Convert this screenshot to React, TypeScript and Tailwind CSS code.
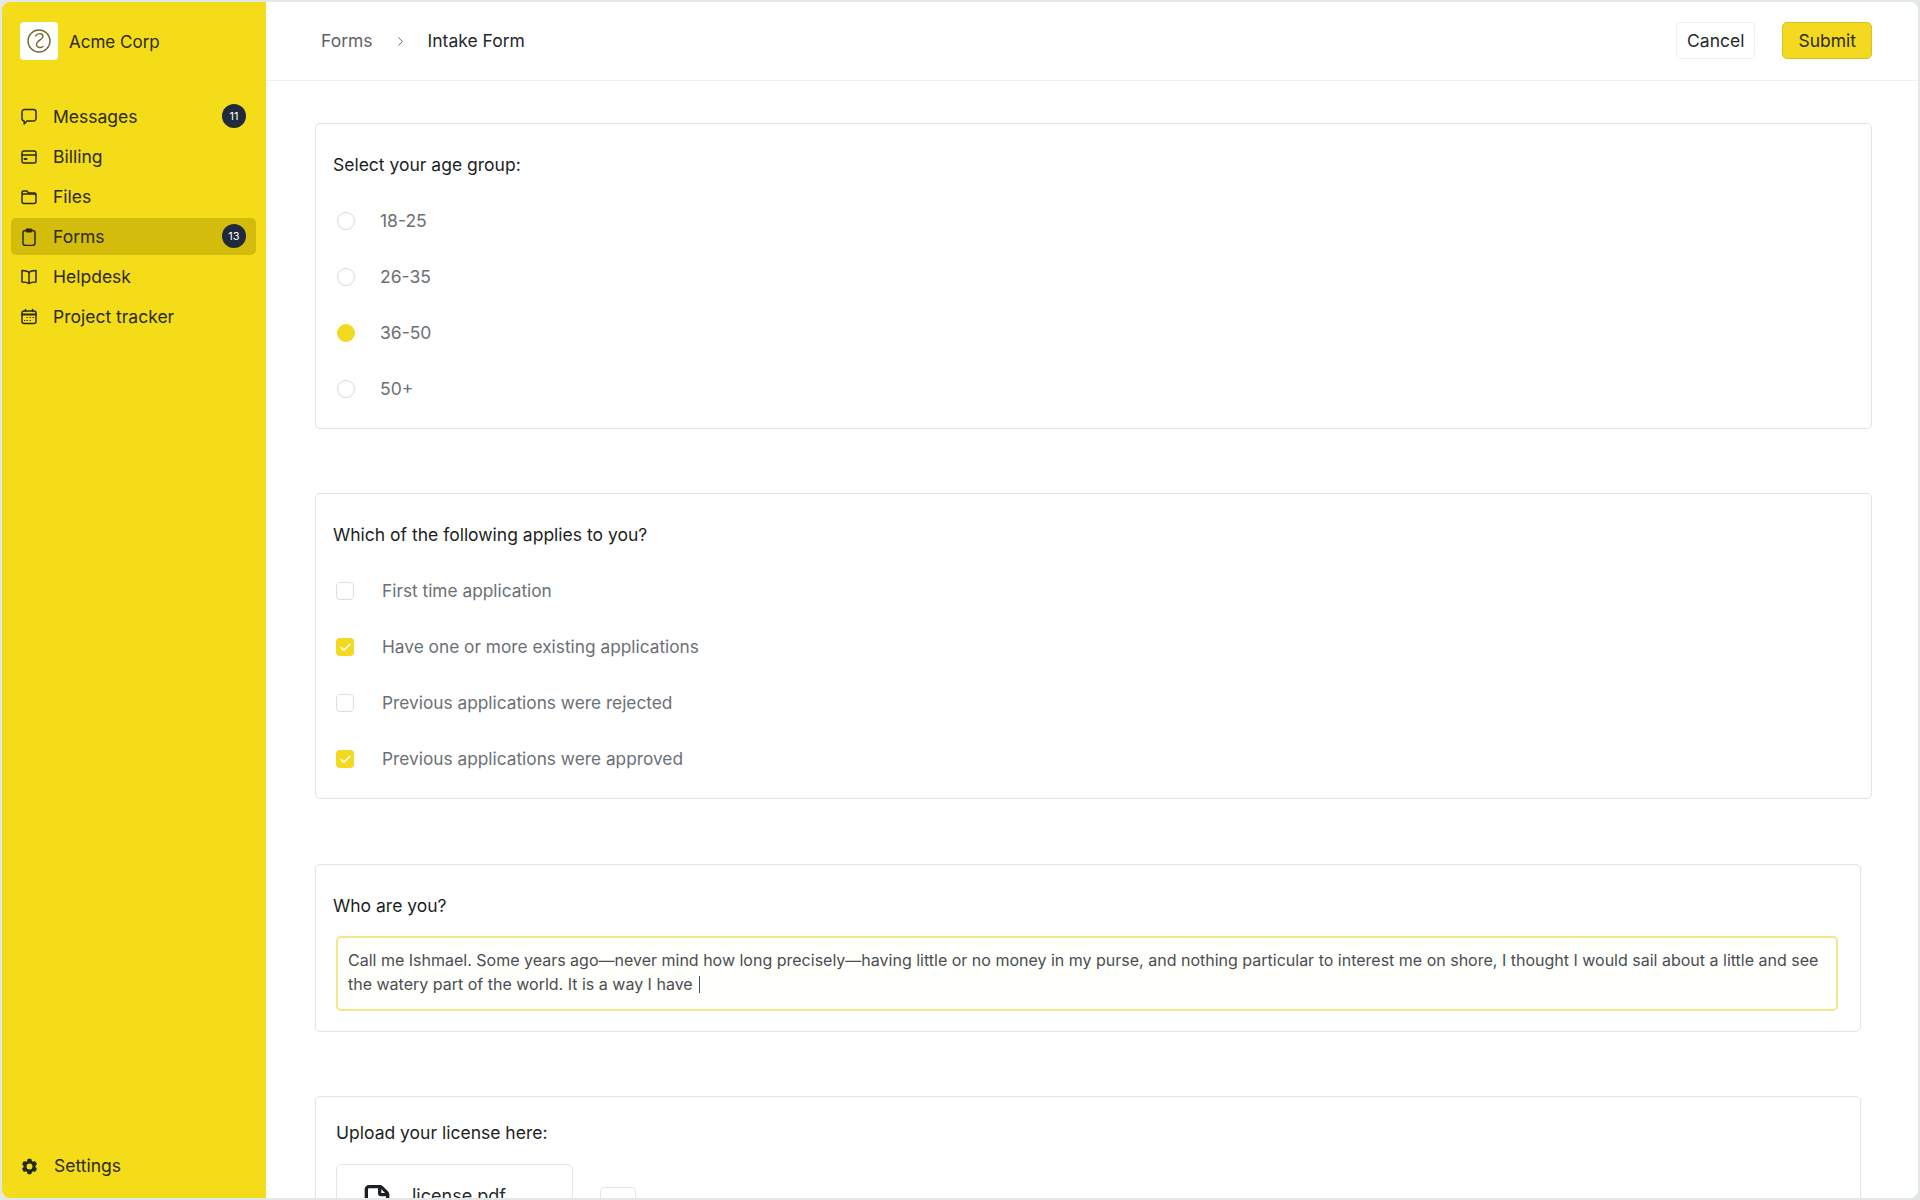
import { Check, ChevronRight, File } from "lucide-react";
import { HiCog6Tooth } from "react-icons/hi2";

const iconStroke = { fill: "none", stroke: "#2b2a12", strokeWidth: 1.5, strokeLinecap: "round", strokeLinejoin: "round" } as const;

function MessageIcon() {
  return (
    <svg width="18" height="18" viewBox="0 0 18 18" {...iconStroke}>
      <path d="M4.500 1.500h9a2.500 2.500 0 0 1 2.500 2.500v6.500a2.500 2.500 0 0 1-2.500 2.500h-6.500l-2.800 3v-3h-.2a2.500 2.500 0 0 1-2-2.500v-6.500a2.500 2.500 0 0 1 2.500-2.500z" />
    </svg>
  );
}

function CardIcon() {
  return (
    <svg width="18" height="18" viewBox="0 0 18 18" {...iconStroke}>
      <rect x="2" y="3" width="14" height="12" rx="2" />
      <path d="M2 7h14" />
      <path d="M4.500 11h2" strokeWidth="2" />
    </svg>
  );
}

function FolderIcon() {
  return (
    <svg width="18" height="18" viewBox="0 0 18 18" {...iconStroke}>
      <path d="M2 6v-1.500a1.500 1.500 0 0 1 1.500-1.500h3.500l1.500 2h6a1.500 1.500 0 0 1 1.500 1.500" />
      <rect x="2" y="6" width="14" height="9.500" rx="2" />
    </svg>
  );
}

function ClipboardIcon() {
  return (
    <svg width="18" height="18" viewBox="0 0 18 18" {...iconStroke}>
      <rect x="3" y="2.500" width="12" height="15" rx="2.500" />
      <rect x="6" y="1" width="6" height="3" rx="1" fill="#2b2a12" strokeWidth="1" />
    </svg>
  );
}

function BookIcon() {
  return (
    <svg width="18" height="18" viewBox="0 0 18 18" {...iconStroke}>
      <path d="M9 4.500c-1.500-1.500-3.500-2-7-2v11.500c3.500 0 5.500 .5 7 1.500c1.500-1 3.500-1.500 7-1.500v-11.500c-3.500 0-5.500 .5-7 2z" />
      <path d="M9 4.500v11" />
    </svg>
  );
}

function CalendarIcon() {
  return (
    <svg width="18" height="18" viewBox="0 0 18 18" {...iconStroke}>
      <rect x="2" y="3" width="14" height="12.500" rx="2" />
      <path d="M2 6.500h14" strokeWidth="2" />
      <path d="M5.500 1.500v2M12.500 1.500v2" />
      <path d="M7 9.500h.5M10 9.500h.5M13 9.500h.5M4.500 12.500h.5M7 12.500h.5M10 12.500h.5" strokeWidth="1.100" />
    </svg>
  );
}

const navItems = [
  { label: "Messages", icon: MessageIcon, badge: "11" },
  { label: "Billing", icon: CardIcon },
  { label: "Files", icon: FolderIcon },
  { label: "Forms", icon: ClipboardIcon, badge: "13", active: true },
  { label: "Helpdesk", icon: BookIcon },
  { label: "Project tracker", icon: CalendarIcon },
];

const ages = [
  { label: "18-25" },
  { label: "26-35" },
  { label: "36-50", checked: true },
  { label: "50+" },
];

const applies = [
  { label: "First time application" },
  { label: "Have one or more existing applications", checked: true },
  { label: "Previous applications were rejected" },
  { label: "Previous applications were approved", checked: true },
];

function Logo() {
  return (
    <div className="flex h-[38px] w-[38px] items-center justify-center rounded-[4px] bg-white">
      <svg width="26" height="26" viewBox="0 0 26 26" fill="none" stroke="#6f6a32" strokeWidth="1.4" strokeLinecap="round">
        <circle cx="13" cy="13" r="11" />
        <path d="M9.500 8c2-3.500 7.500-3 7.500 .5c0 3-6.500 4-6.500 8c0 3 4 4 6.500 2" />
      </svg>
    </div>
  );
}

function Sidebar() {
  return (
    <aside className="flex w-[264px] shrink-0 flex-col bg-[#f5dc18] text-[#2b2a12]">
      <div className="flex items-center gap-[11px] pl-[18px] pt-5 text-[17px]">
        <Logo />
        <span className="pt-[3px]">Acme Corp</span>
      </div>
      <nav className="mt-[38px] flex flex-col gap-[3px] pl-[9px] pr-[10px]">
        {navItems.map((item) => (
          <a
            key={item.label}
            className={`flex h-[37px] items-center rounded-[5px] pl-[9px] pr-[10px] text-[17.5px] ${item.active ? "bg-[#d4bc0c]" : ""}`}
          >
            <item.icon />
            <span className="ml-[15px] flex-1 pt-[1px]">{item.label}</span>
            {item.badge && (
              <span className="mb-[1px] flex h-6 w-6 items-center justify-center rounded-full bg-[#1f2a3a] text-[11px] text-white">
                {item.badge}
              </span>
            )}
          </a>
        ))}
      </nav>
      <a className="mt-auto mb-[13px] flex h-[37px] items-center pl-[18px] text-[17.5px]">
        <HiCog6Tooth size={19} className="shrink-0 text-[#1f2a1a]" />
        <span className="ml-[15px]">Settings</span>
      </a>
    </aside>
  );
}

function Card({ title, className, children }: { title: string; className?: string; children: React.ReactNode }) {
  return (
    <section className={`shrink-0 rounded-[5px] border border-[#dfe3e6] bg-white pl-[17px] ${className ?? ""}`}>
      <h2 className="pt-[29px] text-[17.5px] leading-6 font-normal text-[#1c1f24]">{title}</h2>
      {children}
    </section>
  );
}

function Radio({ checked }: { checked?: boolean }) {
  if (checked) return <span className="ml-[4px] h-[18px] w-[18px] rounded-full bg-[#f3d91f]" />;
  return <span className="ml-[4px] h-[18px] w-[18px] rounded-full border border-[#d5d8db] bg-white" />;
}

function Box({ checked }: { checked?: boolean }) {
  if (checked)
    return (
      <span className="ml-[3px] flex h-[18px] w-[18px] items-center justify-center rounded-[4px] bg-[#f3d91f]">
        <Check size={13} strokeWidth={3} className="text-white" />
      </span>
    );
  return <span className="ml-[3px] h-[18px] w-[18px] rounded-[4px] border border-[#dcdfe2] bg-white" />;
}

export default function App() {
  return (
    <div className="h-screen overflow-hidden bg-[#e1e8e6] p-[2px]" style={{ fontFamily: "Inter, sans-serif" }}>
      <div className="flex h-full overflow-hidden rounded-[8px] bg-white">
        <Sidebar />
        <main className="flex min-w-0 flex-1 flex-col">
          <header className="flex h-[79px] shrink-0 items-center border-b border-[#eef0f1] pl-[55px] pr-[46px] text-[17.5px]">
            <span className="text-[#5f6368]">Forms</span>
            <ChevronRight size={15} strokeWidth={1.5} className="ml-[20px] text-[#5f6368]" />
            <span className="ml-[20px] text-[#25282c]">Intake Form</span>
            <button className="mb-[2px] ml-auto h-[37px] rounded-[4px] border border-[#f0f1f2] bg-white px-[10px] pt-[2px] text-[#25282c]">Cancel</button>
            <button className="mb-[2px] ml-[27px] h-[37px] rounded-[5px] border border-[#d9c21a] bg-[#f3d91f] px-[15px] pt-[2px] text-[#2b2a12]">Submit</button>
          </header>
          <div className="flex flex-1 flex-col overflow-hidden pl-[49px] pr-[46px] pt-[42px]">
            <Card title="Select your age group:" className="h-[306px]">
              <div className="mt-[16px] flex flex-col">
                {ages.map((a) => (
                  <label key={a.label} className="flex h-14 items-center text-[17.5px] text-[#6b7075]">
                    <Radio checked={a.checked} />
                    <span className="ml-[25px]">{a.label}</span>
                  </label>
                ))}
              </div>
            </Card>
            <Card title="Which of the following applies to you?" className="mt-[64px] h-[306px]">
              <div className="mt-[16px] flex flex-col">
                {applies.map((a) => (
                  <label key={a.label} className="flex h-14 items-center text-[17.3px] text-[#6b7075]">
                    <Box checked={a.checked} />
                    <span className="ml-[28px]">{a.label}</span>
                  </label>
                ))}
              </div>
            </Card>
            <Card title="Who are you?" className="mt-[65px] mr-[11px] h-[168px] pr-[22px]">
              <div className="mt-[18px] ml-[3px] h-[75px] rounded-[5px] border-2 border-[#f5e68c] bg-[#fffffb] pt-[10px] pl-[10px] pr-[10px] text-[16px] leading-6 text-[#4a4e53]">
                Call me Ishmael. Some years ago—never mind how long precisely—having little or no money in my purse, and nothing particular to interest me on shore, I thought I would sail about a little and see the watery part of the world. It is a way I have <span className="ml-[2px] inline-block h-[17px] w-px translate-y-[3px] bg-[#4a4e53]" />
              </div>
            </Card>
            <Card title="Upload your license here:" className="mt-[64px] mr-[11px] h-[200px] [&>h2]:ml-[3px] [&>h2]:pt-[24px]">
              <div className="flex items-start">
                <div className="ml-[3px] mt-[19px] flex h-[100px] w-[237px] rounded-[6px] border border-[#e3e6e9] bg-white pl-[24px] pt-[19px]">
                  <File size={32} strokeWidth={2.5} className="text-[#1c1f24]" />
                  <span className="ml-[19px] pt-[2px] text-[18px] leading-5 text-[#25282c]">license.pdf</span>
                </div>
                <div className="ml-[27px] mt-[42px] h-10 w-[36px] rounded-[4px] border border-[#e3e6e9] bg-white" />
              </div>
            </Card>
          </div>
        </main>
      </div>
    </div>
  );
}
